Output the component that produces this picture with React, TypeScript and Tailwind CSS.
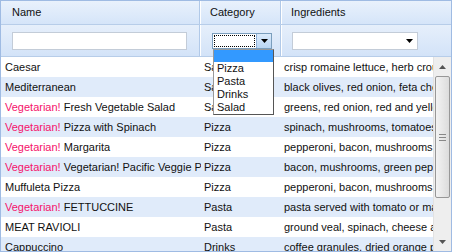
const rows = [
  { veg: false, name: "Caesar", cat: "Salad", ing: "crisp romaine lettuce, herb croutons, parmesan" },
  { veg: false, name: "Mediterranean", cat: "Salad", ing: "black olives, red onion, feta cheese" },
  { veg: true, name: "Fresh Vegetable Salad", cat: "Salad", ing: "greens, red onion, red and yellow peppers" },
  { veg: true, name: "Pizza with Spinach", cat: "Pizza", ing: "spinach, mushrooms, tomatoes" },
  { veg: true, name: "Margarita", cat: "Pizza", ing: "pepperoni, bacon, mushrooms, onions" },
  { veg: true, name: "Vegetarian! Pacific Veggie Pizza", cat: "Pizza", ing: "bacon, mushrooms, green peppers" },
  { veg: false, name: "Muffuleta Pizza", cat: "Pizza", ing: "pepperoni, bacon, mushrooms, olives" },
  { veg: true, name: "FETTUCCINE", cat: "Pasta", ing: "pasta served with tomato or marinara" },
  { veg: false, name: "MEAT RAVIOLI", cat: "Pasta", ing: "ground veal, spinach, cheese and herbs" },
  { veg: false, name: "Cappuccino", cat: "Drinks", ing: "coffee granules, dried orange peel" },
];

const Arrow = ({ up = false, color = "#000" }: { up?: boolean; color?: string }) => (
  <svg width="7" height="4" viewBox="0 0 7 4" className="block">
    <path d={up ? "M0 4 L3.5 0 L7 4 Z" : "M0 0 L7 0 L3.5 4 Z"} fill={color} />
  </svg>
);

const App = () => {
  return (
    <div
      className="relative w-[452px] h-[252px] overflow-hidden border border-[#9fbbe3] bg-white text-[11px] text-[#111]"
      style={{ fontFamily: '"Liberation Sans", Arial, sans-serif' }}
    >
      {/* header */}
      <div className="flex h-[24px] border-b border-[#b7cde9] bg-gradient-to-b from-[#e9f1fc] to-[#d5e5f9]">
        <div className="w-[199px] shrink-0 flex items-center pl-[11px] border-r border-[#b1c9e8]">Name</div>
        <div className="w-[81px] shrink-0 flex items-center pl-[9px] border-r border-[#b1c9e8] border-l border-l-white">Category</div>
        <div className="flex-1 flex items-center pl-[9px] border-l border-l-white">Ingredients</div>
      </div>

      {/* filter row */}
      <div className="flex h-[32px] border-b border-[#b7cde9] bg-gradient-to-b from-[#e6effb] to-[#d3e3f8]">
        <div className="w-[199px] shrink-0 flex items-center pl-[11px] border-r border-[#b1c9e8]">
          <div className="w-[175px] h-[18px] bg-white border border-[#c3ccd8]" />
        </div>
        <div className="w-[81px] shrink-0 flex items-center pl-[11px] border-r border-[#b1c9e8] border-l border-l-white">
          <div className="flex w-[60px] h-[16px] bg-white border border-[#7b9ebd]">
            <div className="flex-1 m-[1px] border border-dotted border-black" />
            <div className="w-[15px] flex items-center justify-center bg-gradient-to-b from-[#dcebfb] to-[#b9d5f3] border-l border-[#8fb1d8]">
              <Arrow />
            </div>
          </div>
        </div>
        <div className="flex-1 flex items-center pl-[10px] border-l border-l-white">
          <div className="w-[126px] h-[18px] bg-white border border-[#c3ccd8] flex items-center justify-end pr-[4px]">
            <Arrow />
          </div>
        </div>
      </div>

      {/* body */}
      <div className="flex">
        <div className="flex-1 min-w-0">
          {rows.map((r, i) => (
            <div key={i} className={`flex h-[20px] items-center ${i % 2 ? "bg-[#e0ebfa]" : "bg-white"}`}>
              <div className="w-[200px] shrink-0 pl-[4px] overflow-hidden whitespace-nowrap">
                {r.veg && <span className="text-[#f5116a]">Vegetarian! </span>}
                {r.name}
              </div>
              <div className="w-[80px] shrink-0 pl-[3px] overflow-hidden whitespace-nowrap">{r.cat}</div>
              <div className="flex-1 pl-[3px] overflow-hidden whitespace-nowrap">{r.ing}</div>
            </div>
          ))}
        </div>

        {/* scrollbar */}
        <div className="w-[18px] h-[194px] shrink-0 flex flex-col items-center bg-[#eeeeee] border-l border-[#e2e2e2]">
          <div className="h-[18px] flex items-center justify-center pt-[1px]">
            <Arrow up color="#555" />
          </div>
          <div className="mt-[1px] w-[15px] h-[122px] rounded-[2px] border border-[#979797] bg-gradient-to-r from-[#f3f3f3] to-[#dcdcdc] flex flex-col items-center justify-center gap-[2px]">
            <div className="w-[7px] h-px bg-[#888]" />
            <div className="w-[7px] h-px bg-[#888]" />
            <div className="w-[7px] h-px bg-[#888]" />
          </div>
          <div className="flex-1" />
          <div className="h-[18px] flex items-center justify-center">
            <Arrow color="#555" />
          </div>
        </div>
      </div>

      {/* open dropdown list */}
      <div className="absolute left-[212px] top-[48px] w-[61px] bg-white border border-[#555] border-l-[#999] border-t-[#999]">
        <div className="h-[12px] bg-[#3399ff]" />
        {["Pizza", "Pasta", "Drinks", "Salad"].map((c) => (
          <div key={c} className="h-[13px] leading-[13px] pl-[3px]">{c}</div>
        ))}
      </div>
    </div>
  );
};

export default App;
